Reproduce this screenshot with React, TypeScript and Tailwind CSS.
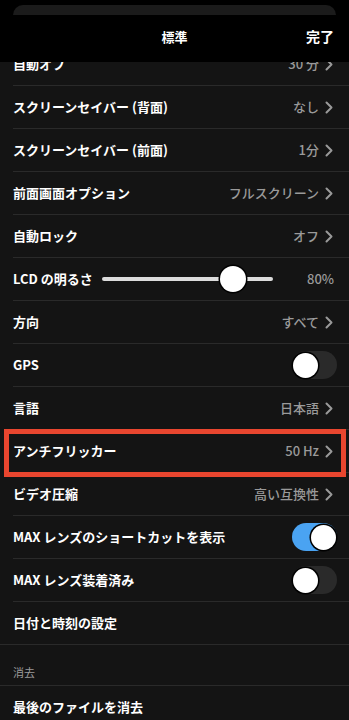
import React from "react";

const font = { fontFamily: '"Noto Sans CJK JP", "Noto Sans", sans-serif' };

function Chevron() {
  return (
    <svg width="8" height="13" viewBox="0 0 8 13" className="shrink-0">
      <path d="M1.5 1.5 L6.5 6.5 L1.5 11.5" fill="none" stroke="#9a9a9a" strokeWidth="2" strokeLinecap="round" strokeLinejoin="round" />
    </svg>
  );
}

function Toggle({ on }: { on: boolean }) {
  return (
    <div className={`relative w-[45px] h-[28px] rounded-full ${on ? "bg-[#4aa3f2]" : "bg-[#2a2a2a]"}`}>
      <div
        className={`absolute top-[1.5px] w-[25px] h-[25px] rounded-full bg-white shadow-[0_0_0_1.5px_#000] ${on ? "right-[1.5px]" : "left-[1px]"}`}
      />
    </div>
  );
}

function Row({
  label,
  value,
  chevron = true,
  right,
  full = false,
  children,
}: {
  label: string;
  value?: string;
  chevron?: boolean;
  right?: React.ReactNode;
  full?: boolean;
  children?: React.ReactNode;
}) {
  return (
    <div className="relative">
      <div className="flex items-center h-[42px] pl-[13px] pr-[16px]">
        <span className="text-[13px] font-bold text-white whitespace-nowrap">{label}</span>
        <div className="flex-1" />
        {right ?? (
          <div className="flex items-center gap-[6px]">
            {value && <span className="text-[13px] text-[#9a9a9a] font-medium">{value}</span>}
            {chevron && <Chevron />}
          </div>
        )}
      </div>
      <div className={`h-px bg-[#2a2a2a] ${full ? "" : "ml-[13px]"}`} />
      {children}
    </div>
  );
}

export default function App() {
  return (
    <div className="w-[349px] h-[720px] overflow-hidden bg-[#141414] relative" style={font}>
      <div className="relative z-10 h-[62px] bg-black flex flex-col">
        <div className="mx-[13px] mt-[5px] h-[10px] rounded-t-[10px] bg-[#1b1b1b]" />
        <div className="flex items-center justify-center relative mt-[12px]">
          <span className="text-[13px] font-bold text-white">標準</span>
          <span className="absolute right-[15px] text-[14px] font-bold text-white">完了</span>
        </div>
      </div>
      <div className="-mt-[19px]">
        <Row label="自動オフ" value="30 分" />
        <Row label="スクリーンセイバー (背面)" value="なし" />
        <Row label="スクリーンセイバー (前面)" value="1分" />
        <Row label="前面画面オプション" value="フルスクリーン" />
        <Row label="自動ロック" value="オフ" />
        <Row
          label="LCD の明るさ"
          right={
            <div className="flex items-center">
              <div className="relative w-[171px] h-[4px] rounded-full bg-[#dcdcdc] mr-[34px]">
                <div className="absolute left-[118px] top-[-11px] w-[26px] h-[26px] rounded-full bg-white shadow-[0_0_0_1.5px_#000]" />
              </div>
              <span className="text-[13px] text-[#9a9a9a] font-medium -mr-[1px]">80%</span>
            </div>
          }
        />
        <Row label="方向" value="すべて" />
        <Row label="GPS" right={<div className="-mr-[4px]"><Toggle on={false} /></div>} />
        <Row label="言語" value="日本語" />
        <Row label="アンチフリッカー" value="50 Hz">
          <div className="absolute left-[4px] right-[3px] top-[-1px] h-[48px] border-[5px] border-[#e9462f] pointer-events-none" />
        </Row>
        <Row label="ビデオ圧縮" value="高い互換性" />
        <Row label="MAX レンズのショートカットを表示" right={<div className="-mr-[4px]"><Toggle on={true} /></div>} />
        <Row label="MAX レンズ装着済み" right={<div className="-mr-[4px]"><Toggle on={false} /></div>} />
        <Row label="日付と時刻の設定" chevron={false} full />
        <div className="h-[40px] flex items-end pl-[13px] pb-[5px]">
          <span className="text-[11px] text-[#9a9a9a]">消去</span>
        </div>
        <div className="h-px bg-[#2a2a2a]" />
        <Row label="最後のファイルを消去" chevron={false} />
      </div>
    </div>
  );
}
